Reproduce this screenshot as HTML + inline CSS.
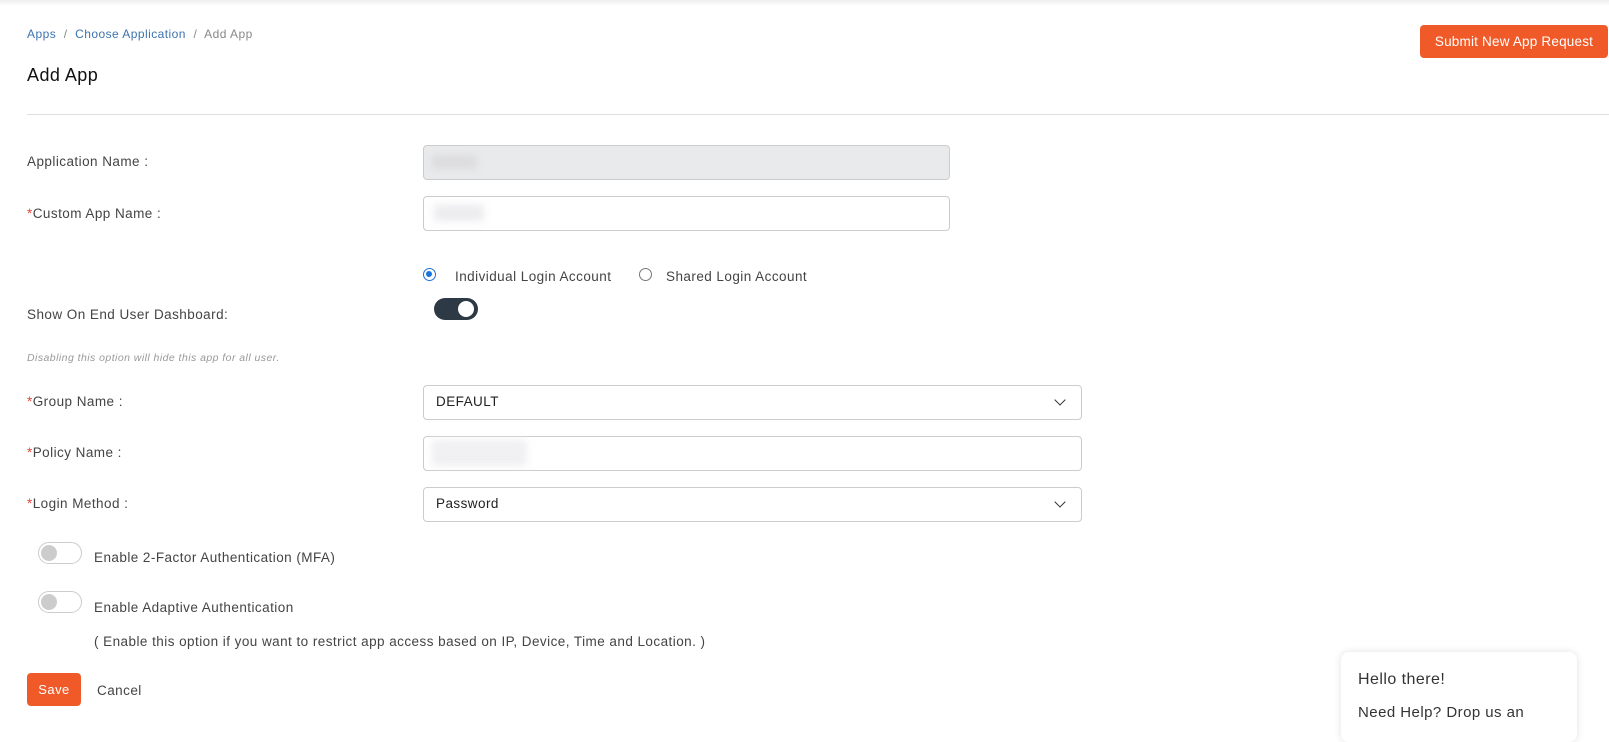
<!DOCTYPE html>
<html><head><meta charset="utf-8"><style>
*{box-sizing:border-box;margin:0;padding:0}
body{width:1609px;height:728px;overflow:hidden;background:#fff;font-family:"Liberation Sans",sans-serif;color:#333;position:relative;letter-spacing:0.45px}
.a{position:absolute;white-space:nowrap}
.lbl{font-size:13.5px;color:#444}
.req{color:#e0453a}
.inp{position:absolute;border:1px solid #ccc;border-radius:4px;background:#fff}
.blur{position:absolute;background:#e6e6e8;filter:blur(4px)}
.tog{position:absolute;width:44px;height:22px;border-radius:11px}
.knob{position:absolute;width:16px;height:16px;border-radius:50%;top:3px}
.chev{position:absolute;width:8px;height:8px;border-right:1.6px solid #333;border-bottom:1.6px solid #333;transform:rotate(45deg)}
</style></head><body>
<div class="a" style="left:0;top:0;width:1609px;height:6px;background:linear-gradient(#eee,#fff)"></div>
<div class="a" style="left:27px;top:27px;font-size:12px;color:#888"><span style="color:#3c74b0">Apps</span> &nbsp;/&nbsp; <span style="color:#3c74b0">Choose Application</span> &nbsp;/&nbsp; Add App</div>
<div class="a" style="left:27px;top:65px;font-size:18px;color:#111">Add App</div>
<div class="a" style="left:1420px;top:25px;width:188px;height:33px;background:#f05a28;border-radius:4px;color:#fff;font-size:13.5px;letter-spacing:0.2px;line-height:33px;text-align:center">Submit New App Request</div>
<div class="a" style="left:27px;top:114px;width:1582px;height:1px;background:#ddd"></div>

<div class="a lbl" style="left:27px;top:154px">Application Name :</div>
<div class="inp" style="left:423px;top:145px;width:527px;height:35px;background:#e9eaec"></div>
<div class="blur" style="left:432px;top:155px;width:45px;height:14px;background:#dcdcde"></div>
<div class="a lbl" style="left:27px;top:206px"><span class="req">*</span>Custom App Name :</div>
<div class="inp" style="left:423px;top:196px;width:527px;height:35px"></div>
<div class="blur" style="left:434px;top:205px;width:50px;height:16px;background:#ececee"></div>

<div class="a" style="left:423px;top:268px;width:13px;height:13px;border-radius:50%;border:1.5px solid #1a73d9;background:#fff"><div style="position:absolute;left:2px;top:2px;width:6px;height:6px;border-radius:50%;background:#1a73d9"></div></div>
<div class="a lbl" style="left:455px;top:269px">Individual Login Account</div>
<div class="a" style="left:639px;top:268px;width:13px;height:13px;border-radius:50%;border:1px solid #777"></div>
<div class="a lbl" style="left:666px;top:269px">Shared Login Account</div>

<div class="a lbl" style="left:27px;top:307px">Show On End User Dashboard:</div>
<div class="tog" style="left:434px;top:298px;background:#2d3a45"><div class="knob" style="left:24px;background:#fff"></div></div>
<div class="a" style="left:27px;top:352px;font-size:10.5px;font-style:italic;color:#999">Disabling this option will hide this app for all user.</div>

<div class="a lbl" style="left:27px;top:394px"><span class="req">*</span>Group Name :</div>
<div class="inp" style="left:423px;top:385px;width:659px;height:35px"></div>
<div class="a" style="left:436px;top:394px;font-size:13.5px;color:#222">DEFAULT</div>
<div class="chev" style="left:1056px;top:396px"></div>

<div class="a lbl" style="left:27px;top:445px"><span class="req">*</span>Policy Name :</div>
<div class="inp" style="left:423px;top:436px;width:659px;height:35px"></div>
<div class="blur" style="left:432px;top:440px;width:95px;height:26px;background:#f0f0f2"></div>

<div class="a lbl" style="left:27px;top:496px"><span class="req">*</span>Login Method :</div>
<div class="inp" style="left:423px;top:487px;width:659px;height:35px"></div>
<div class="a" style="left:436px;top:496px;font-size:13.5px;color:#222">Password</div>
<div class="chev" style="left:1056px;top:498px"></div>

<div class="tog" style="left:38px;top:542px;border:1.5px solid #ccc;background:#fff"><div class="knob" style="left:2px;top:1.5px;background:#ccc"></div></div>
<div class="a lbl" style="left:94px;top:550px">Enable 2-Factor Authentication (MFA)</div>
<div class="tog" style="left:38px;top:591px;border:1.5px solid #ccc;background:#fff"><div class="knob" style="left:2px;top:1.5px;background:#ccc"></div></div>
<div class="a lbl" style="left:94px;top:600px">Enable Adaptive Authentication</div>
<div class="a lbl" style="left:94px;top:634px">( Enable this option if you want to restrict app access based on IP, Device, Time and Location. )</div>

<div class="a" style="left:27px;top:673px;width:54px;height:33px;background:#f05a28;border-radius:4px;color:#fff;font-size:13px;line-height:33px;text-align:center">Save</div>
<div class="a lbl" style="left:97px;top:683px">Cancel</div>

<div class="a" style="left:1341px;top:652px;width:236px;height:90px;background:#fff;border-radius:8px;box-shadow:0 0 8px rgba(0,0,0,0.12)"></div>
<div class="a" style="left:1358px;top:671px;font-size:16px;color:#333">Hello there!</div>
<div class="a" style="left:1358px;top:704px;font-size:15px;color:#333">Need Help? Drop us an</div>
</body></html>
